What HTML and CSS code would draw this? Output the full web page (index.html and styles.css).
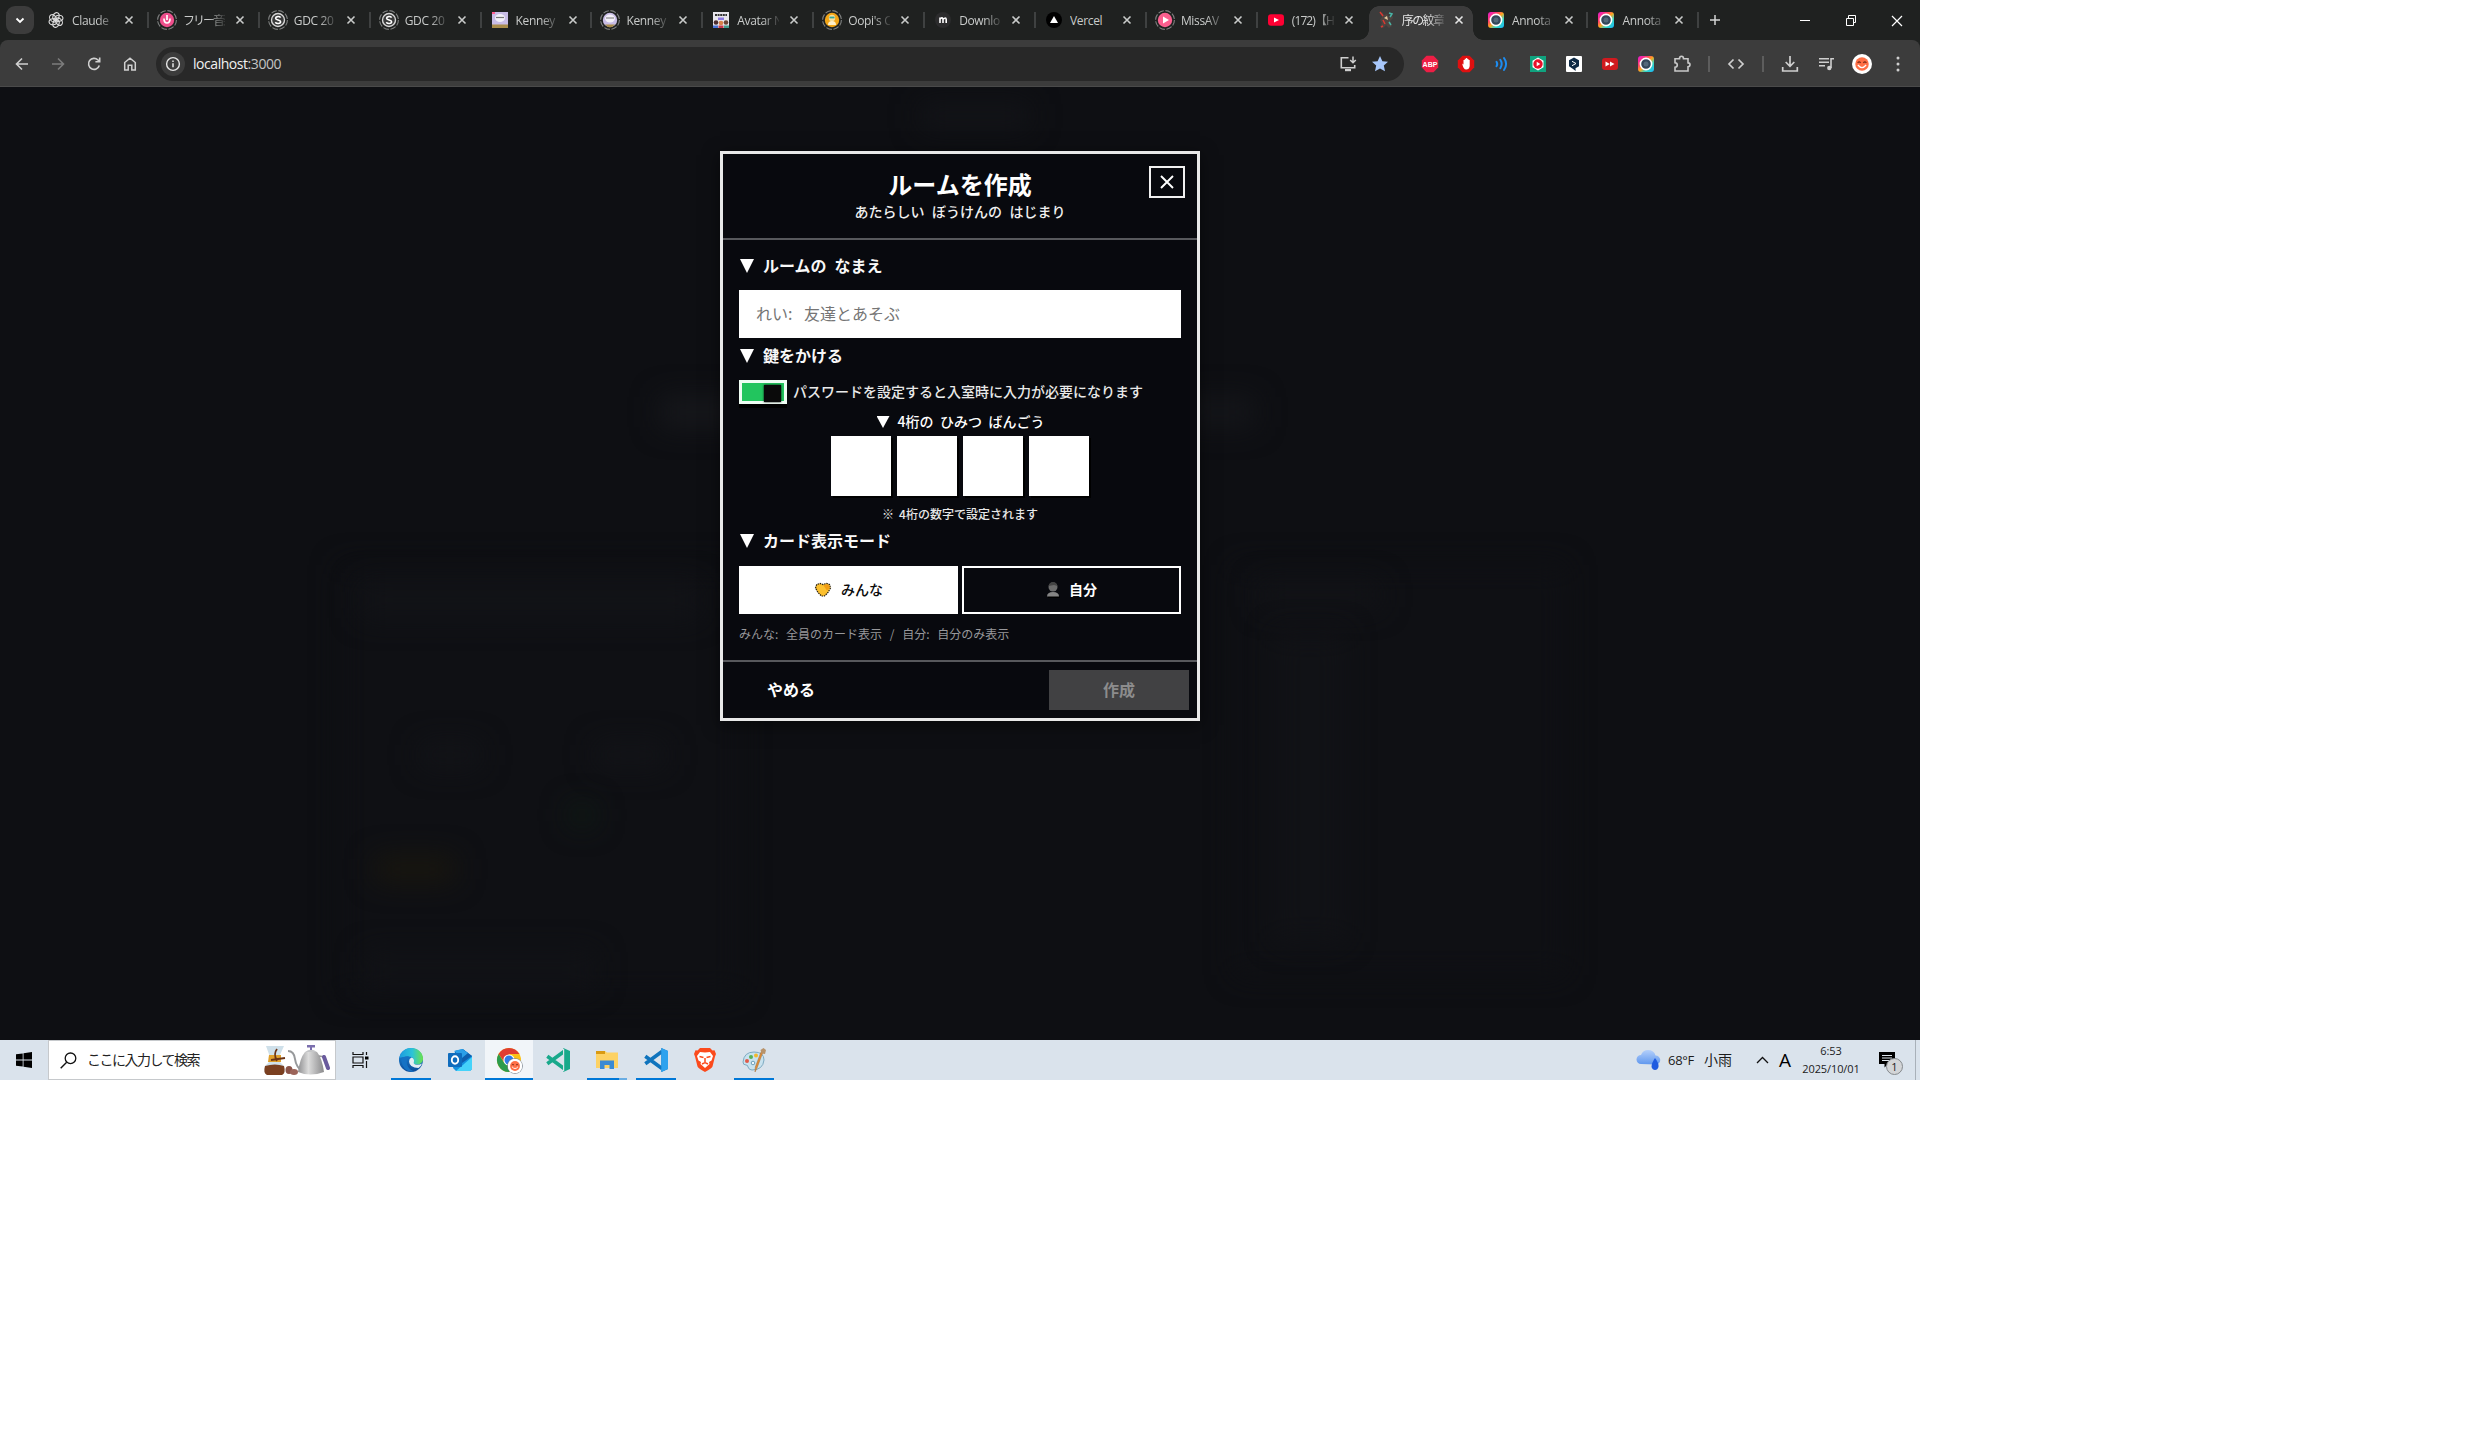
FILE: index.html
```html
<!DOCTYPE html>
<html lang="ja">
<head>
<meta charset="utf-8">
<title>ルームを作成</title>
<link rel="stylesheet" href="styles.css">
</head>
<body>
<svg class="defs" width="0" height="0">
  <defs>
    <linearGradient id="rainbow" x1="0" y1="0" x2="1" y2="1"><stop offset="0" stop-color="#e619d8"/><stop offset=".3" stop-color="#ff3a6e"/><stop offset=".5" stop-color="#ffa51e"/><stop offset=".7" stop-color="#35d6c0"/><stop offset="1" stop-color="#19b8ff"/></linearGradient>
    <linearGradient id="edgeA" x1="0" y1="0" x2="1" y2="0"><stop offset="0" stop-color="#1c9be0"/><stop offset=".55" stop-color="#2cc3d8"/><stop offset="1" stop-color="#6be34a"/></linearGradient>
    <linearGradient id="edgeB" x1="0" y1="0" x2="0" y2="1"><stop offset="0" stop-color="#1b8fe0"/><stop offset="1" stop-color="#0d4a97"/></linearGradient>
    <linearGradient id="cloud" x1="0" y1="0" x2="0" y2="1"><stop offset="0" stop-color="#b4d0fb"/><stop offset="1" stop-color="#5f97ee"/></linearGradient>
    <linearGradient id="steel" x1="0" y1="0" x2="1" y2="0"><stop offset="0" stop-color="#8f8f91"/><stop offset=".4" stop-color="#dcdcdc"/><stop offset="1" stop-color="#8a8a8c"/></linearGradient>
    <symbol id="x" viewBox="0 0 10 10"><path d="M1.500 1.500l7 7M8.500 1.500l-7 7" stroke="currentColor" stroke-width="1.600"/></symbol>
    <symbol id="ring" viewBox="0 0 20 20"><circle cx="10" cy="10" r="9.400" fill="none" stroke="#7f8180" stroke-width="1.100" stroke-dasharray="5.800 1.600"/></symbol>
    <symbol id="gdc" viewBox="0 0 20 20"><use href="#ring"/><circle cx="10" cy="10" r="6.500" fill="#3a3b3b" stroke="#d6d6d6" stroke-width="1.400"/><path d="M12.600 7.600C11.500 6 7.600 6.300 7.600 8.200c0 2.200 5 1.400 5 3.600 0 2.100-4 2.300-5.300.5" fill="none" stroke="#fff" stroke-width="1.600"/></symbol>
    <symbol id="annota" viewBox="0 0 20 20"><rect x="2" y="2" width="16" height="16" rx="3" fill="url(#rainbow)"/><circle cx="10" cy="10" r="5.600" fill="#33475a" stroke="#fff" stroke-width="1.600"/><circle cx="10" cy="10" r="2.500" fill="#54687a"/></symbol>
    <symbol id="face" viewBox="0 0 16 16"><circle cx="8" cy="8" r="8" fill="#fff"/><circle cx="8" cy="8" r="5.400" fill="#ff6f45"/><path d="M4.500 7q1.200-1.600 2.400 0M9.100 7q1.200-1.600 2.400 0" fill="none" stroke="#7d2c18" stroke-width="1"/><path d="M4.700 8.800q3.300 4 6.600 0" fill="none" stroke="#fff" stroke-width="1"/></symbol>
    <symbol id="code" viewBox="0 0 24 24"><path d="M1.300 8.200L18 20.500M1.300 15.800L18 3.500" stroke="currentColor" stroke-width="3.600" fill="none"/><path d="M17.300 0L24 3v18l-6.700 3z" fill="currentColor"/></symbol>
  </defs>
</svg>

<main class="screen">
  <header class="tabstrip">
    <button class="tab-search"><svg width="10" height="10" viewBox="0 0 10 10"><path d="M1.500 3.500L5 7l3.500-3.500" fill="none" stroke="#fff" stroke-width="1.800"/></svg></button>
    <div class="tabs">
      <div class="tab"><svg class="fav" viewBox="0 0 20 20"><g fill="none" stroke="#dcdcdc" stroke-width="1.100"><ellipse cx="8.800" cy="6.800" rx="3" ry="4" transform="rotate(20 10 10)"/><ellipse cx="8.800" cy="6.800" rx="3" ry="4" transform="rotate(80 10 10)"/><ellipse cx="8.800" cy="6.800" rx="3" ry="4" transform="rotate(140 10 10)"/><ellipse cx="8.800" cy="6.800" rx="3" ry="4" transform="rotate(200 10 10)"/><ellipse cx="8.800" cy="6.800" rx="3" ry="4" transform="rotate(260 10 10)"/><ellipse cx="8.800" cy="6.800" rx="3" ry="4" transform="rotate(320 10 10)"/></g></svg><span class="title">Claude</span><svg class="close"><use href="#x"/></svg></div>
      <div class="tab"><svg class="fav" viewBox="0 0 20 20"><use href="#ring"/><circle cx="10" cy="10" r="7.200" fill="#ee4f8c"/><path d="M10 5v5M7 8.500q0 4.500 3 4.500t3-4.500" fill="none" stroke="#fff" stroke-width="1.700"/></svg><span class="title jp">フリー音楽</span><svg class="close"><use href="#x"/></svg></div>
      <div class="tab"><svg class="fav"><use href="#gdc"/></svg><span class="title">GDC 20</span><svg class="close"><use href="#x"/></svg></div>
      <div class="tab"><svg class="fav"><use href="#gdc"/></svg><span class="title">GDC 20</span><svg class="close"><use href="#x"/></svg></div>
      <div class="tab"><svg class="fav" viewBox="0 0 20 20"><rect x="2" y="2" width="16" height="16" fill="#c9bde6"/><ellipse cx="10" cy="8" rx="5" ry="4" fill="#f3f0f8"/><path d="M6 7.500h8" stroke="#777" stroke-width="1.200"/><rect x="2" y="14.500" width="16" height="3.500" fill="#a98c4a"/><rect x="2" y="2" width="3" height="2" fill="#ff5f8f"/></svg><span class="title">Kenney</span><svg class="close"><use href="#x"/></svg></div>
      <div class="tab"><svg class="fav" viewBox="0 0 20 20"><use href="#ring"/><circle cx="10" cy="10" r="7.200" fill="#c9bde6"/><ellipse cx="10" cy="8.500" rx="5" ry="4" fill="#f3f0f8"/><path d="M6 8h8" stroke="#777"/><path d="M5 14.500h10q-2 2.700-5 2.700t-5-2.700" fill="#a98c4a"/></svg><span class="title">Kenney</span><svg class="close"><use href="#x"/></svg></div>
      <div class="tab"><svg class="fav" viewBox="0 0 20 20"><rect x="2" y="2" width="16" height="16" fill="#e8e6ec"/><path d="M4 5h12" stroke="#333" stroke-width="2" stroke-dasharray="2 .6"/><path d="M7 7.500h6v2.500H7z" fill="#8c7ae0"/><circle cx="5" cy="12.500" r="2.300" fill="#4b2d2f"/><circle cx="10" cy="13" r="2.300" fill="#d8824b"/><circle cx="15" cy="12.500" r="2.300" fill="#6b4534"/><path d="M2 18v-2.500h5V18z" fill="#4671d8"/><path d="M7.500 18v-2.500h5V18z" fill="#c53a4a"/><path d="M13 18v-2.500h5V18z" fill="#3f9c8b"/></svg><span class="title">Avatar N</span><svg class="close"><use href="#x"/></svg></div>
      <div class="tab"><svg class="fav" viewBox="0 0 20 20"><use href="#ring"/><circle cx="10" cy="10" r="7.200" fill="#f2a516"/><circle cx="10" cy="8" r="3.200" fill="#f6dfa0"/><path d="M7.500 7.500h5" stroke="#31a79a" stroke-width="1.800"/><path d="M6 15q0-4 4-4t4 4z" fill="#fff0c9"/></svg><span class="title">Oopi's C</span><svg class="close"><use href="#x"/></svg></div>
      <div class="tab"><svg class="fav" viewBox="0 0 20 20"><circle cx="10" cy="10" r="8" fill="#2c2c2d"/><path d="M7 13V7.500M7 9q2.800-2.500 3 .5V13M10 9.500q3-3 3.200 0V13" fill="none" stroke="#fff" stroke-width="1.600"/></svg><span class="title">Downlo</span><svg class="close"><use href="#x"/></svg></div>
      <div class="tab"><svg class="fav" viewBox="0 0 20 20"><circle cx="10" cy="10" r="8" fill="#000"/><path d="M10 6l4 7H6z" fill="#fff"/></svg><span class="title full">Vercel</span><svg class="close"><use href="#x"/></svg></div>
      <div class="tab"><svg class="fav" viewBox="0 0 20 20"><use href="#ring"/><circle cx="10" cy="10" r="7.200" fill="#fb5f8f"/><path d="M8 6.500l6 3.500-6 3.500z" fill="#fff"/></svg><span class="title">MissAV</span><svg class="close"><use href="#x"/></svg></div>
      <div class="tab last"><svg class="fav" viewBox="0 0 20 20"><rect x="2" y="4.300" width="16" height="11.400" rx="3" fill="#ff0033"/><path d="M8 7.500l5 2.500-5 2.500z" fill="#fff"/></svg><span class="title yt">(172)【H</span><svg class="close"><use href="#x"/></svg></div>
      <div class="tab active"><svg class="fav" viewBox="0 0 20 20"><path d="M6 2l2 3 3-1 2 3 3-2 1 3-3 3 2 5-3 2-3-3-3 3-3-1 2-4-2-3 2-3z" fill="#4f4440"/><path d="M4 2l3 4M7 10l2 4M5 17l2-1" stroke="#d93831" stroke-width="1.500"/><path d="M13 3l3 1-2 3M13 12l2 3" stroke="#49b4a5" stroke-width="1.500" fill="none"/><path d="M8 8l3-2 1 4z" fill="#e3c9a0"/></svg><span class="title jp">序の紋章</span><svg class="close"><use href="#x"/></svg></div>
      <div class="tab"><svg class="fav"><use href="#annota"/></svg><span class="title">Annota</span><svg class="close"><use href="#x"/></svg></div>
      <div class="tab"><svg class="fav"><use href="#annota"/></svg><span class="title">Annota</span><svg class="close"><use href="#x"/></svg></div>
    </div>
    <svg class="new-tab" width="12" height="12" viewBox="0 0 12 12"><path d="M6 1v10M1 6h10" stroke="#d5d5d5" stroke-width="1.500"/></svg>
    <div class="win-buttons">
      <svg width="46" height="38" viewBox="0 0 46 38"><path d="M18 19.500h10" stroke="#fff"/></svg>
      <svg width="46" height="38" viewBox="0 0 46 38"><path d="M18.500 17.500h7v7h-7zM20.500 17v-2.500h7v7H26" fill="none" stroke="#fff"/></svg>
      <svg width="46" height="38" viewBox="0 0 46 38"><path d="M18 15l10 10M28 15L18 25" stroke="#fff" stroke-width="1.200"/></svg>
    </div>
  </header>

  <nav class="toolbar">
    <div class="nav-icons">
      <svg viewBox="0 0 16 16"><path d="M14 8H2.500M8 2.500L2.500 8 8 13.500" fill="none" stroke="#d0d0d0" stroke-width="1.600"/></svg>
      <svg viewBox="0 0 16 16"><path d="M2 8h11.500M8 2.500L13.500 8 8 13.500" fill="none" stroke="#7c7c7c" stroke-width="1.600"/></svg>
      <svg viewBox="0 0 16 16"><path d="M13.300 9.500A5.500 5.500 0 1 1 12 4l1.500 1.500M13.700 1.500v4.300H9.400" fill="none" stroke="#d0d0d0" stroke-width="1.600"/></svg>
      <svg viewBox="0 0 16 16"><path d="M2.700 14V6.500L8 2.200l5.300 4.300V14H9.800V9.300H6.200V14z" fill="none" stroke="#d0d0d0" stroke-width="1.500"/></svg>
    </div>
    <div class="omnibox">
      <span class="info"><svg width="16" height="16" viewBox="0 0 16 16"><circle cx="8" cy="8" r="6.400" fill="none" stroke="#e6e6e6" stroke-width="1.400"/><path d="M8 7.200v4M8 4.500v1.400" stroke="#e6e6e6" stroke-width="1.500"/></svg></span>
      <span class="url">localhost<em>:3000</em></span>
      <svg width="18" height="18" viewBox="0 0 18 18"><path d="M9.500 2.700H2.300v10h13.400V10" fill="none" stroke="#cfcfcf" stroke-width="1.600"/><path d="M6 14h6v2.200H6z" fill="#cfcfcf"/><path d="M14 1.500v6M11.200 5l2.800 2.800L16.800 5" fill="none" stroke="#cfcfcf" stroke-width="1.500"/></svg>
      <svg width="18" height="18" viewBox="0 0 18 18"><path d="M9 1l2.400 5.200 5.600.6-4.200 3.800 1.200 5.700L9 13.400l-5 2.900 1.200-5.700L1 6.800l5.600-.6z" fill="#a8c7fa"/></svg>
    </div>
    <div class="extensions">
      <svg viewBox="0 0 18 18"><path d="M5.500.8h7l4.700 4.700v7l-4.700 4.700h-7L.8 12.500v-7z" fill="#ed1e45"/><text x="9" y="11.800" class="abp">ABP</text></svg>
      <svg viewBox="0 0 18 18"><path d="M5.500.8h7l4.700 4.700v7l-4.700 4.700h-7L.8 12.500v-7z" fill="#e01010"/><path d="M5.200 8.500l1.300 1V5h1.200V3.800H9V3h1.300v1h1.200v1h1.200v6q-.5 3.500-3.500 3.500T5.200 8.500z" fill="#fff"/></svg>
      <svg viewBox="0 0 18 18"><path d="M3.500 6.800q1.500 2.200 0 4.400M7.300 4.800q2.800 4.200 0 8.400M11 3q4.200 6 0 12" fill="none" stroke="#1d8df2" stroke-width="2" stroke-linecap="round"/></svg>
      <svg viewBox="0 0 18 18"><rect x="1" y="1" width="16" height="16" fill="#10a37f"/><path d="M9 2.500l5.500 3.200v6.600L9 15.500l-5.500-3.200V5.700z" fill="#fff"/><circle cx="9" cy="9" r="4.700" fill="#e8102a"/><path d="M7.700 6.700L11.300 9l-3.600 2.300z" fill="#fff"/></svg>
      <svg viewBox="0 0 18 18"><rect x="1" y="1" width="16" height="16" rx="1" fill="#fff"/><path d="M9 2.500l5 2.800v6l-3.500 2 .2 2.700-3-2.200L4 11.300v-6z" fill="#0f2b46"/><path d="M7 6.300l4 2.200-4 2.200" fill="none" stroke="#fff" stroke-width="1"/></svg>
      <svg viewBox="0 0 18 18"><rect x="1" y="3" width="16" height="12" rx="3" fill="#d01a1f"/><path d="M4.500 6.500L8.800 9l-4.300 2.500zM9 6.500L13.500 9 9 11.500z" fill="#fff"/></svg>
      <svg class="big"><use href="#annota"/></svg>
      <svg viewBox="0 0 18 18"><path d="M2 3.700h4.500q0-2.400 2-2.400t2 2.400H15v4.200q2 .2 2 1.900t-2 1.900V16H2v-3.800q2.300-.2 2.300-2.300T2 7.700z" fill="none" stroke="#c9c9c9" stroke-width="1.600"/></svg>
    </div>
    <i class="bar"></i>
    <svg class="tool" viewBox="0 0 18 18"><path d="M6.500 4.500L2 9l4.500 4.500M11.500 4.500L16 9l-4.500 4.500" fill="none" stroke="#cfcfcf" stroke-width="1.700"/></svg>
    <i class="bar"></i>
    <div class="tools-end">
      <svg viewBox="0 0 18 18"><path d="M9 1v10M4.700 7L9 11.300 13.300 7M1.700 12v4h14.600v-4" fill="none" stroke="#cfcfcf" stroke-width="1.700"/></svg>
      <svg viewBox="0 0 18 18"><path d="M2 3.700h10M2 7.200h10M2 10.700h6M14 13V3.700h3" fill="none" stroke="#cfcfcf" stroke-width="1.600"/><circle cx="12.300" cy="13" r="2.200" fill="#cfcfcf"/></svg>
      <svg class="avatar"><use href="#face"/></svg>
      <svg viewBox="0 0 18 18" fill="#cfcfcf"><circle cx="9" cy="3" r="1.500"/><circle cx="9" cy="9" r="1.500"/><circle cx="9" cy="15" r="1.500"/></svg>
    </div>
  </nav>

  <section class="page">
    <div class="backdrop">
      <i class="blob b-title"></i><i class="blob b-left"></i><i class="blob b-right"></i>
      <i class="blob b-card1"></i><i class="blob b-card2"></i><i class="blob b-head1"></i><i class="blob b-head2"></i><i class="blob b-list"></i>
      <i class="blob b-row1"></i><i class="blob b-row2"></i><i class="blob b-green"></i><i class="blob b-gold"></i><i class="blob b-foot"></i>
    </div>
    <div class="modal">
      <div class="modal-head">
        <h1>ルームを作成</h1>
        <p>あたらしい ぼうけんの はじまり</p>
        <button class="modal-close"><svg width="14" height="14" viewBox="0 0 14 14"><path d="M1 1l12 12M13 1L1 13" stroke="#fff" stroke-width="1.900"/></svg></button>
      </div>
      <div class="modal-body">
        <h2 class="label"><i class="tri"></i><span>ルームの なまえ</span></h2>
        <input class="name" placeholder="れい: 友達とあそぶ">
        <h2 class="label lock"><i class="tri"></i><span>鍵をかける</span></h2>
        <div class="lock-row"><span class="toggle"><i></i></span><span class="lift">パスワードを設定すると入室時に入力が必要になります</span></div>
        <div class="pin-label"><i class="tri small"></i><span>4桁の ひみつ ばんごう</span></div>
        <div class="pins"><i></i><i></i><i></i><i></i></div>
        <div class="pin-note">※ 4桁の数字で設定されます</div>
        <h2 class="label mode"><i class="tri"></i><span>カード表示モード</span></h2>
        <div class="modes">
          <button class="on"><svg width="18" height="16" viewBox="0 0 18 16"><path d="M1.500 6l1.200-3.500L6 1.500l3 1 3.500-1 3 1L16.500 6 14 10.500 10.500 14h-3L4 10.500z" fill="#fcc02e" stroke="#2a2112" stroke-width="1.200" stroke-dasharray="1.500 .8"/><path d="M9.500 3.500l3-1.500 2.500 1 .8 3-2.800 2.500z" fill="#f09d13"/></svg><span>みんな</span></button>
          <button><svg width="14" height="16" viewBox="0 0 14 16"><path d="M2 16q-1-4 5-4t7 4z" fill="#000"/><circle cx="7" cy="5" r="4.500" fill="#6c6c6c"/><path d="M2.500 4q1-4 4.500-4t4.500 4L8 3z" fill="#444"/><path d="M1 14.500q0-4.500 6-4.500t6 4.500z" fill="#858585"/></svg><span>自分</span></button>
        </div>
        <div class="mode-note">みんな: 全員のカード表示 / 自分: 自分のみ表示</div>
      </div>
      <div class="modal-foot"><button class="cancel">やめる</button><button class="create">作成</button></div>
    </div>
  </section>

  <footer class="taskbar">
    <div class="start"><svg width="16" height="16" viewBox="0 0 16 16"><path d="M0 2.300L6.700 1.400v6.200H0zM7.500 1.200L16 0v7.600H7.500zM0 8.400h6.700v6.200L0 13.700zM7.500 8.400H16V16l-8.500-1.200z"/></svg></div>
    <div class="search">
      <svg width="17" height="17" viewBox="0 0 17 17"><circle cx="10.500" cy="6.300" r="5.300" fill="none" stroke="#111" stroke-width="1.300"/><path d="M6.700 10.200L.7 16.200" stroke="#111" stroke-width="1.400"/></svg>
      <span>ここに入力して検索</span>
      <svg class="brew" width="67" height="32" viewBox="0 0 67 32">
        <path d="M3 2h18l-5 11v4l5 5q2 7-2 9H4q-4-2-2-9l5-5v-4z" fill="#cfe0ea"/><path d="M2 22q10-3 19 0 2 7-2 9H4q-4-2-2-9z" fill="#7a3f20"/><path d="M6 11h12v7H5z" fill="#e0a02c"/><path d="M14 5q-4 5 0 12M8 16l14-2" stroke="#6b3314" stroke-width="1.800" fill="none"/>
        <ellipse cx="26" cy="26" rx="3.500" ry="4" fill="#8a5348"/><ellipse cx="31" cy="28" rx="4" ry="3" fill="#9b6459"/>
        <path d="M25 7q6 0 7 8t8 13" fill="none" stroke="#97999b" stroke-width="2"/><path d="M42 8h12q5 6 7 20-14 5-26 0 2-14 7-20z" fill="url(#steel)"/><path d="M42 8q6-5 12 0z" fill="#c4c5c7"/><path d="M44 1h8v2.500h-3V6h-2V3.500h-3z" fill="#7b6fae"/><path d="M56 12l6 1" stroke="#999" stroke-width="1.500"/><path d="M61 13l4 11" stroke="#6a5b9d" stroke-width="4" stroke-linecap="round"/>
      </svg>
    </div>
    <div class="task-view"><svg width="17" height="16" viewBox="0 0 17 16"><path d="M1 0v2.500h10V0M1 16v-2.500h10V16M1 5h10v6H1zM14.500 0v3M14.500 9v7" fill="none" stroke="#111" stroke-width="1.200"/><path d="M13 4.500h3.500v3H13z"/></svg></div>
    <div class="apps">
      <div class="app run"><svg viewBox="0 0 24 24"><circle cx="12" cy="12" r="12" fill="url(#edgeB)"/><path d="M.3 10C2 3 7 0 12 0c7 0 12 5 12 10.500 0 4-3 6-6 6-2.500 0-4-1-3.500-2 1-1.500.5-6-5-6C5 8.500 1.500 9.500.3 10z" fill="url(#edgeA)"/><path d="M10 13.500q0-3 2.500-4 3.500 1.500 2.300 4.700-.5 2.300 3.200 2.600 3 0 5-1.300-1 3-3.500 4.500Q10.500 20 10 13.500z" fill="#e4edf4"/><path d="M2 12q3-4.500 8-3.500-3 3-2 8 2 5.500 7.500 7Q4 25 2 12z" fill="#1672c4"/></svg></div>
      <div class="app"><svg viewBox="0 0 24 24"><path d="M7 3l8-2 9 7v13l-2 2H8l-3-3z" fill="#1490df"/><path d="M24 9v12l-2 2H8z" fill="#45d3fa"/><path d="M7 3l8-1.500L24 8l-10 7-7-4z" fill="#0f5fae"/><path d="M6 3l8-2 6 4-6 5z" fill="#2b9fe8"/><rect x="0" y="5" width="14" height="14" rx="1" fill="#0f6cbd"/><ellipse cx="7" cy="12" rx="3.200" ry="3.700" fill="none" stroke="#fff" stroke-width="1.900"/></svg></div>
      <div class="app run current"><svg viewBox="0 0 24 24"><circle cx="12" cy="12" r="12" fill="#fbc116"/><path d="M1.600 6A12 12 0 0 1 22.400 6H12L8 15z" fill="#df3d32"/><path d="M1.600 6A12 12 0 0 0 12 24l5-9-10-.5z" fill="#2c9b4d"/><circle cx="12" cy="12" r="5.600" fill="#fff"/><circle cx="12" cy="12" r="4.500" fill="#2f7be5"/><circle cx="18" cy="18" r="7.800" fill="#7d8791"/><svg x="10.700" y="10.700" width="14.600" height="14.600"><use href="#face"/></svg></svg></div>
      <div class="app teal"><svg viewBox="0 0 24 24"><use href="#code"/><path d="M17.600 1v22" stroke="#dbe3ec" stroke-width="1.200"/></svg></div>
      <div class="app run split"><svg viewBox="0 0 24 24"><path d="M1 3h9l2 1.500h11V20H1z" fill="#fdd264"/><path d="M1 3h9v3H1z" fill="#d99a12"/><path d="M5 12.500h14V21h-4.500v-4h-5v4H5z" fill="#3b8ad3"/></svg></div>
      <div class="app run blue"><svg viewBox="0 0 24 24"><use href="#code"/><path d="M17.300 0L24 3v18l-6.700 3z" fill="#2da2ee"/></svg></div>
      <div class="app"><svg viewBox="0 0 24 24"><path d="M7 0h10l2.500 2.500 2-.3L23 6l-1 2.500-2.500 10Q19 20 12 24q-7-4-7.500-5.500L2 8.500 1 6l1.500-3.800 2 .3z" fill="#fb4a1c"/><path d="M12 4.500l5-.5 3 4-1.500 4.500L16 14l.5 2-4.500 4-4.500-4 .5-2-2.500-1.500L4 8l3-4z" fill="#fff"/><path d="M6.500 8.500l4 1M17.500 8.500l-4 1M12 10v5M9 16l3-1.500 3 1.500" stroke="#fb4a1c" stroke-width="1.500" fill="none"/></svg></div>
      <div class="app run"><svg viewBox="0 0 24 24"><path d="M1 14Q2 4 12 4t10 8q-1 10-12 10-3 0-4-3 0-2-2-2-3 0-3-3z" fill="#c8e2ef" stroke="#7daac1"/><circle cx="5" cy="13" r="2" fill="#e05a48"/><circle cx="9" cy="9" r="2" fill="#58b058"/><circle cx="14" cy="7.500" r="2" fill="#f2b82c"/><circle cx="11" cy="15" r="1.800" fill="#eef6fa" stroke="#6d9eb8"/><path d="M21 4L15 20l-2 4 .3-5L19 4z" fill="#e08a35" stroke="#a2703a" stroke-width=".5"/><path d="M18.500 2l3-2 2.500 2-1 4-3.500-.5z" fill="#b8936a"/></svg></div>
    </div>
    <div class="tray">
      <svg class="weather" width="25" height="22" viewBox="0 0 25 22"><path d="M5 15a4.500 4.500 0 0 1 0-9Q7 1 12 1q6 0 7.500 5.500a4.500 4.500 0 0 1 .5 9z" fill="url(#cloud)"/><path d="M19 9q4 5 3.500 9-1 3-3.500 3t-3.500-3Q15.500 14 19 9z" fill="#1f5be0"/></svg>
      <span class="temp">68°F</span><span class="rain">小雨</span>
      <svg class="chev" width="13" height="8" viewBox="0 0 13 8"><path d="M1 7l5.500-5.500L12 7" fill="none" stroke="#111" stroke-width="1.300"/></svg>
      <span class="ime">A</span>
      <div class="clock"><span>6:53</span><span>2025/10/01</span></div>
      <div class="notes"><svg width="16" height="16" viewBox="0 0 16 16"><path d="M0 0h16v12H9l-3.500 3.500V12H0z"/><path d="M3 3.500h10M3 6h10M3 8.500h10" stroke="#dde5ec"/></svg><b>1</b></div>
    </div>
  </footer>
</main>
</body>
</html>
```
FILE: styles.css
```css
* { box-sizing: border-box; }
body { margin: 0; background: #fff; font-family: "Open Sans", "Noto Sans CJK JP", sans-serif; }
button { margin: 0; padding: 0; border: 0; background: none; font: inherit; color: inherit; }
svg { display: block; flex: none; }
.defs { position: absolute; }
.screen { width: 1920px; height: 1080px; display: flex; flex-direction: column; background: #1f2120; }

/* tab strip */
.tabstrip { height: 40px; display: flex; align-items: center; padding-left: 6px; flex: none; }
.tab-search { width: 28px; height: 28px; border-radius: 9px; background: #3c3c3c; display: grid; place-items: center; flex: none; }
.tabs { display: flex; margin-left: 3px; align-self: stretch; flex: none; }
.tab { width: 110.9px; display: flex; align-items: center; padding-left: 9px; position: relative; color: #c9cbca; flex: none; }
.tab::after { content: ""; position: absolute; right: -1px; top: 12px; width: 2px; height: 16px; background: #3f4141; }
.tab.last::after, .tab.active::after { display: none; }
.tab.last { width: 110px; }
.tab.active, .tab.active ~ .tab { width: 110.300px; }
.fav { width: 20px; height: 20px; }
.title { width: 42px; margin-left: 6px; font-size: 12px; letter-spacing: -.35px; line-height: 20px; white-space: nowrap; overflow: hidden; padding-top: 1px; -webkit-mask-image: linear-gradient(90deg, #000 60%, rgba(0, 0, 0, .15)); mask-image: linear-gradient(90deg, #000 60%, rgba(0, 0, 0, .15)); }
.title.full { -webkit-mask-image: none; mask-image: none; }
.title.jp { letter-spacing: -2px; }
.active .title.jp { letter-spacing: -1.500px; }
.title.yt { letter-spacing: -.9px; }
.close { width: 10px; height: 10px; margin-left: 10px; }
.tab.active { color: #e6e6e6; z-index: 1; }
.tab.active::before { content: ""; position: absolute; z-index: -1; left: -8px; right: -6px; top: 6px; bottom: 0; background:
  radial-gradient(circle at 0 0, transparent 9.500px, #3c3c3c 10px) left bottom / 10px 10px no-repeat,
  radial-gradient(circle at 100% 0, transparent 9.500px, #3c3c3c 10px) right bottom / 10px 10px no-repeat,
  radial-gradient(circle at 100% 100%, #3c3c3c 9.500px, transparent 10px) 10px 0 / 10px 10px no-repeat,
  radial-gradient(circle at 0 100%, #3c3c3c 9.500px, transparent 10px) calc(100% - 10px) 0 / 10px 10px no-repeat,
  linear-gradient(#3c3c3c, #3c3c3c) center 0 / calc(100% - 40px) 100% no-repeat,
  linear-gradient(#3c3c3c, #3c3c3c) center 10px / calc(100% - 20px) 100% no-repeat; }
.new-tab { margin-left: 11px; }
.win-buttons { display: flex; margin-left: auto; }

/* toolbar */
.toolbar { height: 47px; background: linear-gradient(#3c3c3c 46px, #4a4a4a 46px); border-radius: 8px 8px 0 0; display: flex; align-items: center; flex: none; }
.nav-icons { display: flex; gap: 20px; padding-left: 14px; }
.nav-icons svg { width: 16px; height: 16px; }
.omnibox { width: 1248px; height: 34px; margin-left: 18px; border-radius: 17px; background: #282828; display: flex; align-items: center; padding: 0 15px 0 5px; gap: 14px; flex: none; }
.info { width: 24px; height: 24px; border-radius: 50%; background: #3c3c3c; display: grid; place-items: center; }
.url { flex: 1; margin: -1px 0 0 -6px; font-size: 14px; letter-spacing: -.45px; color: #f0f0f0; }
.url em { font-style: normal; color: #c4c4c4; }
.extensions { display: flex; align-items: center; gap: 18px; margin-left: 17px; }
.extensions svg { width: 18px; height: 18px; }
.extensions .big { width: 20px; height: 20px; margin: 0 -1px; }
.abp { font: bold 7px "Liberation Sans", sans-serif; fill: #fff; text-anchor: middle; }
.bar { width: 2px; height: 16px; background: #5d5d5d; margin-left: 17px; }
.tool { width: 18px; height: 18px; margin-left: 17px; }
.tools-end { display: flex; align-items: center; gap: 18px; margin-left: 17px; }
.tools-end svg { width: 18px; height: 18px; }
.tools-end .avatar { width: 20px; height: 20px; margin: 0 -1px; }

/* page and blurred content behind the dialog */
.page { height: 953px; background: #0e0f13; position: relative; display: flex; justify-content: center; align-items: flex-start; padding-top: 64px; overflow: hidden; flex: none; }
.backdrop { position: absolute; inset: 0; }
.blob { position: absolute; filter: blur(14px); background: #131418; }
.b-title { left: 920px; top: 16px; width: 110px; height: 26px; }
.b-left { left: 660px; top: 310px; width: 80px; height: 30px; background: #17181c; }
.b-right { left: 1185px; top: 310px; width: 70px; height: 30px; background: #15161a; }
.b-card1 { left: 340px; top: 478px; width: 400px; height: 430px; background: #0f1014; }
.b-card2 { left: 1235px; top: 478px; width: 330px; height: 410px; background: #0f1014; }
.b-head1 { left: 360px; top: 495px; width: 340px; height: 36px; background: #121317; }
.b-head2 { left: 1260px; top: 495px; width: 120px; height: 26px; background: #121317; }
.b-list { left: 1275px; top: 545px; width: 70px; height: 310px; background: #111216; }
.b-row1 { left: 420px; top: 656px; width: 60px; height: 24px; }
.b-row2 { left: 595px; top: 656px; width: 70px; height: 24px; }
.b-green { left: 570px; top: 718px; width: 24px; height: 20px; background: #0e1c14; }
.b-gold { left: 375px; top: 770px; width: 80px; height: 24px; background: #1a170e; }
.b-foot { left: 365px; top: 865px; width: 230px; height: 36px; background: #111216; }

/* dialog */
.modal { position: relative; width: 480px; height: 570px; border: 3px solid #e8e8e8; background: #08090e; color: #fff; font-family: "Noto Sans CJK JP", sans-serif; word-spacing: .276em; display: flex; flex-direction: column; box-shadow: 0 4px 16px rgba(0, 0, 0, .5); }
.modal-head { height: 86px; border-bottom: 2px solid #57585c; text-align: center; padding-top: 14px; position: relative; flex: none; }
.modal-head h1 { margin: 0; font-size: 24px; line-height: 32px; font-weight: 700; }
.modal-head p { margin: 1px 0 0; font-size: 14px; line-height: 20px; font-weight: 500; color: #f0f0f0; }
.modal-close { position: absolute; right: 12px; top: 12px; width: 36px; height: 32px; border: 2px solid #f0f0f0; display: grid; place-items: center; }
.modal-body { height: 420px; padding: 14px 16px 0; flex: none; }
.label { height: 24px; margin: 0 0 12px; font-size: 16px; line-height: 24px; font-weight: 700; display: flex; align-items: center; color: #f8f8f8; }
.label span, .lift, .pin-label span { margin-top: -2px; }
.tri { width: 14px; height: 14px; margin: 0 9px 0 1px; background: #fff; clip-path: polygon(0 0, 100% 0, 50% 100%); }
.tri.small { width: 13px; height: 12px; margin: 0 8px 0 1px; }
.name { display: block; width: 100%; height: 48px; border: 0; border-radius: 0; background: #fff; padding: 0 17px 2px; font: 16px "Noto Sans CJK JP", sans-serif; word-spacing: .5em; }
.name::placeholder { color: #757575; }
.lock { margin-top: 6px; }
.lock-row { display: flex; align-items: center; gap: 6px; height: 24px; font-size: 14px; font-weight: 500; color: #e9e9e9; white-space: nowrap; }
.toggle { width: 48px; height: 24px; border: 3px solid #effdf4; background: #22c55e; box-shadow: 0 4px 0 #000; display: flex; justify-content: flex-end; padding: 2px 3px; flex: none; }
.toggle i { width: 17px; height: 17px; background: #0a0a0a; box-shadow: 0 0 2px #000; }
.pin-label { display: flex; align-items: center; justify-content: center; height: 20px; margin: 8px 0 4px; font-size: 14px; font-weight: 500; word-spacing: .24em; }
.pins { display: flex; justify-content: center; gap: 6px; }
.pins i { width: 60px; height: 60px; background: #fff; box-shadow: 2px 2px 0 #000; }
.pin-note { margin-top: 9px; text-align: center; font-size: 12px; line-height: 18px; font-weight: 500; color: #e8e8e8; word-spacing: .2em; }
.mode { margin: 6px 0 13px; }
.modes { display: flex; gap: 4px; }
.modes button { flex: 1; height: 48px; border: 2px solid #fff; display: flex; align-items: center; justify-content: center; gap: 9px; font-size: 14px; font-weight: 700; }
.modes span { margin-top: -2px; }
.modes .on { background: #fff; color: #0a0a0a; font-weight: 500; }
.mode-note { margin-top: 11px; font-size: 12px; line-height: 18px; color: #98989b; word-spacing: .42em; }
.modal-foot { flex: 1; border-top: 2px solid #57585c; display: flex; justify-content: space-between; padding: 8px 8px 0 5px; font-size: 16px; font-weight: 700; }
.modal-foot button { height: 40px; padding-bottom: 2px; }
.cancel { width: 126px; }
.create { width: 140px; background: #414143; color: #8c8c8d; }

/* taskbar */
.taskbar { height: 40px; background: #dae3ec; display: flex; color: #1b1b1b; flex: none; }
.start, .task-view { width: 48px; display: grid; place-items: center; }
.search { width: 288px; background: #fff; border: 1px solid #c6c9cc; display: flex; align-items: center; padding: 0 5px 0 11px; }
.search span { margin: -2px 0 0 10px; font-size: 14px; letter-spacing: -1.500px; font-family: "Noto Sans CJK JP", sans-serif; color: #222; }
.search .brew { margin-left: auto; }
.apps { display: flex; gap: 1px; margin-left: 3px; }
.app { width: 48px; height: 40px; display: grid; place-items: center; position: relative; }
.app > svg { width: 24px; height: 24px; overflow: visible; }
.app.run::after { content: ""; position: absolute; left: 4px; right: 4px; bottom: 0; height: 2px; background: #0078d7; }
.app.current { background: #f1f5f9; }
.app.current::after { left: 0; right: 0; }
.app.split::after { background: linear-gradient(90deg, #0078d7 80%, #69ade3 80%); }
.teal { color: #18a98b; }
.blue { color: #0f74bd; }
.tray { margin-left: auto; display: flex; align-items: center; width: 284px; border-right: 1px solid #a9b1b9; margin-right: 4px; padding-bottom: 1px; white-space: nowrap; flex: none; }
.weather { margin-left: 4px; }
.temp { width: 32px; margin-left: 7px; font-size: 13px; letter-spacing: -.3px; }
.rain { width: 28px; margin-left: 4px; font-size: 14px; margin-top: -2px; font-family: "Noto Sans CJK JP", sans-serif; }
.chev { margin-left: 24px; }
.ime { width: 12px; margin-left: 10px; font-size: 19px; color: #000; }
.clock { width: 62px; margin-left: 9px; display: flex; flex-direction: column; align-items: center; font-size: 11px; line-height: 18px; letter-spacing: -.1px; }
.notes { position: relative; margin-left: 17px; }
.notes b { position: absolute; left: 7px; top: 6px; width: 17px; height: 17px; border-radius: 50%; border: 1px solid #85898d; background: #d3d5d7; font-size: 11px; line-height: 15px; font-weight: 400; text-align: center; }
```
